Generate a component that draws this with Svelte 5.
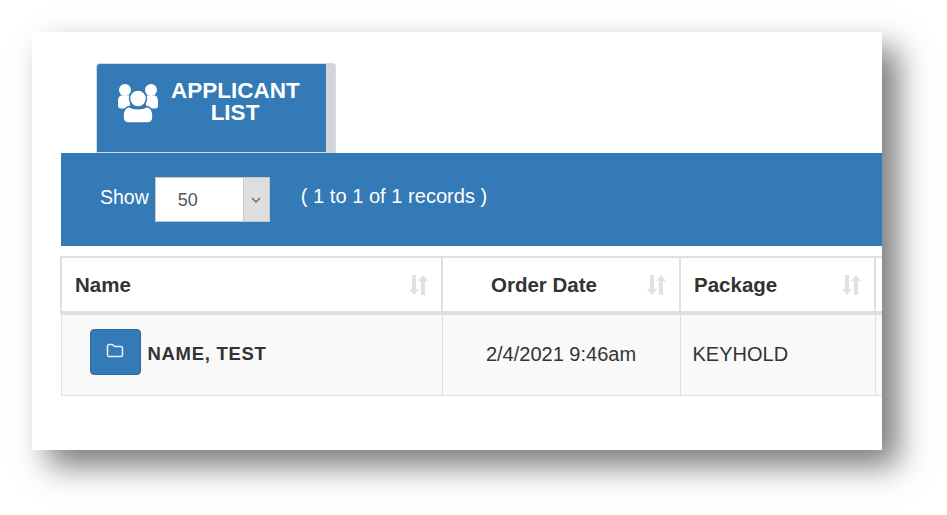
<script>
    const rows = [{ name: 'NAME, TEST', date: '2/4/2021 9:46am', pkg: 'KEYHOLD' }];
</script>

{#snippet sortIcon()}
    <svg class="sort" width="21" height="22" viewBox="0 0 21 22">
        <path d="M4 1h4v14h3l-5 6-5-6h3z" />
        <path d="M15 1l5 6h-3v14h-4V7h-3z" />
    </svg>
{/snippet}

<div class="panel">
    <div class="tabs">
        <div class="tab">
            <svg class="people" width="41" height="41" viewBox="0 0 41 41">
                <circle cx="7" cy="7" r="6" />
                <circle cx="33" cy="7" r="6" />
                <path d="M0 19c0-4 1-6.500 4-6.500h8v13H3c-2 0-3-1-3-3z" />
                <path d="M40 19c0-4-1-6.500-4-6.500h-8v13h9c2 0 3-1 3-3z" />
                <circle class="front" cx="20" cy="15.500" r="8.500" />
                <path class="front" d="M5 33c0-6 2-8.500 6-9.500 5 3 13 3 18 0 4 1 6 3.500 6 9.500 0 4-2 7-5 7H10c-3 0-5-3-5-7z" />
            </svg>
            <span class="tab-label">APPLICANT<br />LIST</span>
        </div>
    </div>

    <div class="toolbar">
        <span class="show">Show</span>
        <div class="select">
            <span class="select-value">50</span>
            <span class="select-arrow">
                <svg width="10" height="6" viewBox="0 0 10 6"><path d="M1 1l4 4 4-4" /></svg>
            </span>
        </div>
        <span class="records">( 1 to 1 of 1 records )</span>
    </div>

    <table>
        <thead>
            <tr>
                <th class="col-name"><div class="head">Name {@render sortIcon()}</div></th>
                <th class="col-date"><div class="head centered"><span>Order Date</span> {@render sortIcon()}</div></th>
                <th class="col-pkg"><div class="head">Package {@render sortIcon()}</div></th>
                <th></th>
            </tr>
        </thead>
        <tbody>
            {#each rows as row}
                <tr>
                    <td class="name-cell">
                        <div class="name-wrap">
                            <button class="folder" aria-label="Open">
                                <svg width="18" height="15" viewBox="0 0 18 15">
                                    <path d="M3 1.500h3.500l2 2H15a1.800 1.800 0 0 1 1.500 1.800V12a1.800 1.800 0 0 1-1.800 1.500H3A1.800 1.800 0 0 1 1.500 12V3A1.800 1.800 0 0 1 3 1.500z" />
                                </svg>
                            </button>
                            <b>{row.name}</b>
                        </div>
                    </td>
                    <td class="date-cell">{row.date}</td>
                    <td class="pkg-cell">{row.pkg}</td>
                    <td></td>
                </tr>
            {/each}
        </tbody>
    </table>
</div>

<style>
    :global(body) {
        height: 515px;
        background: #fff;
        overflow: hidden;
    }

    .panel {
        width: 850px;
        height: 418px;
        margin: 32px 0 0 32px;
        padding: 32px 0 0 29px;
        box-sizing: border-box;
        background: #fff;
        overflow: hidden;
        box-shadow: 16px 16px 30px rgba(0, 0, 0, 0.52);
        font-family: "Liberation Sans", Arial, sans-serif;
        color: #333;
    }

    .tabs {
        display: flex;
        padding-left: 36px;
    }

    .tab {
        width: 238px;
        height: 88px;
        margin-bottom: 1px;
        box-sizing: border-box;
        display: flex;
        align-items: flex-start;
        padding: 16px 0 0 21px;
        background: #337ab7;
        border-right: 9px solid #d2d5da;
        border-radius: 3px 3px 0 0;
        box-shadow: 0 0 0 1px #d8dade;
        color: #fff;
    }

    .people {
        flex: none;
        fill: #fff;
        margin-top: 3px;
    }

    .people .front {
        stroke: #337ab7;
        stroke-width: 1.5;
    }

    .tab-label {
        width: 128px;
        margin-left: 12px;
        font-size: 22.5px;
        font-weight: bold;
        line-height: 22px;
        text-align: center;
    }

    .toolbar {
        width: 821px;
        height: 93px;
        box-sizing: border-box;
        display: flex;
        align-items: flex-start;
        padding: 24px 0 0 39px;
        background: #337ab7;
        color: #fff;
        font-size: 19.500px;
    }

    .show {
        margin-top: 9px;
    }

    .select {
        width: 115px;
        height: 45px;
        box-sizing: border-box;
        display: flex;
        margin-left: 6px;
        background: #fff;
        border: 1px solid #c8c8c8;
        color: #555;
        font-size: 18px;
    }

    .select-value {
        flex: 1;
        padding: 12px 0 0 22px;
    }

    .select-arrow {
        width: 25px;
        display: flex;
        align-items: center;
        justify-content: center;
        background: #dedede;
        border-left: 1px solid #c8c8c8;
    }

    .select-arrow svg {
        fill: none;
        stroke: #666;
        stroke-width: 1.3;
    }

    .records {
        margin: 8px 0 0 31px;
        font-size: 20.1px;
    }

    table {
        width: 881px;
        margin: 10px 0 0 -1px;
        border-collapse: collapse;
        table-layout: fixed;
        font-size: 20px;
    }

    th, td {
        border: 1px solid #e0e0e0;
        box-sizing: border-box;
        padding: 0;
    }

    th {
        height: 56px;
        border-width: 2px 2px 4px;
        background: #fff;
        color: #333;
        font-size: 20.5px;
    }

    .col-name { width: 381px; }
    .col-date { width: 238px; }
    .col-pkg { width: 195px; }

    .head {
        display: flex;
        justify-content: space-between;
        align-items: center;
        padding: 0 12px 0 13px;
    }

    .head.centered span {
        flex: 1;
        text-align: center;
        padding-right: 14px;
    }

    .sort {
        flex: none;
        fill: #dfe1e4;
    }

    td {
        height: 82px;
        background: #f9f9f9;
    }

    .name-wrap {
        display: flex;
        align-items: center;
        gap: 7px;
        padding: 0 0 5px 28px;
        font-size: 18.500px;
        letter-spacing: 0.7px;
    }

    .name-wrap b {
        margin-top: 3px;
    }

    .folder {
        width: 51px;
        height: 46px;
        display: flex;
        align-items: center;
        justify-content: center;
        padding: 0 0 4px;
        background: #337ab7;
        border: 1px solid #2e6da4;
        border-radius: 4px;
    }

    .folder svg {
        fill: none;
        stroke: #e8eef5;
        stroke-width: 1.6;
    }

    .date-cell {
        text-align: center;
    }

    .pkg-cell {
        padding-left: 12px;
    }
</style>
